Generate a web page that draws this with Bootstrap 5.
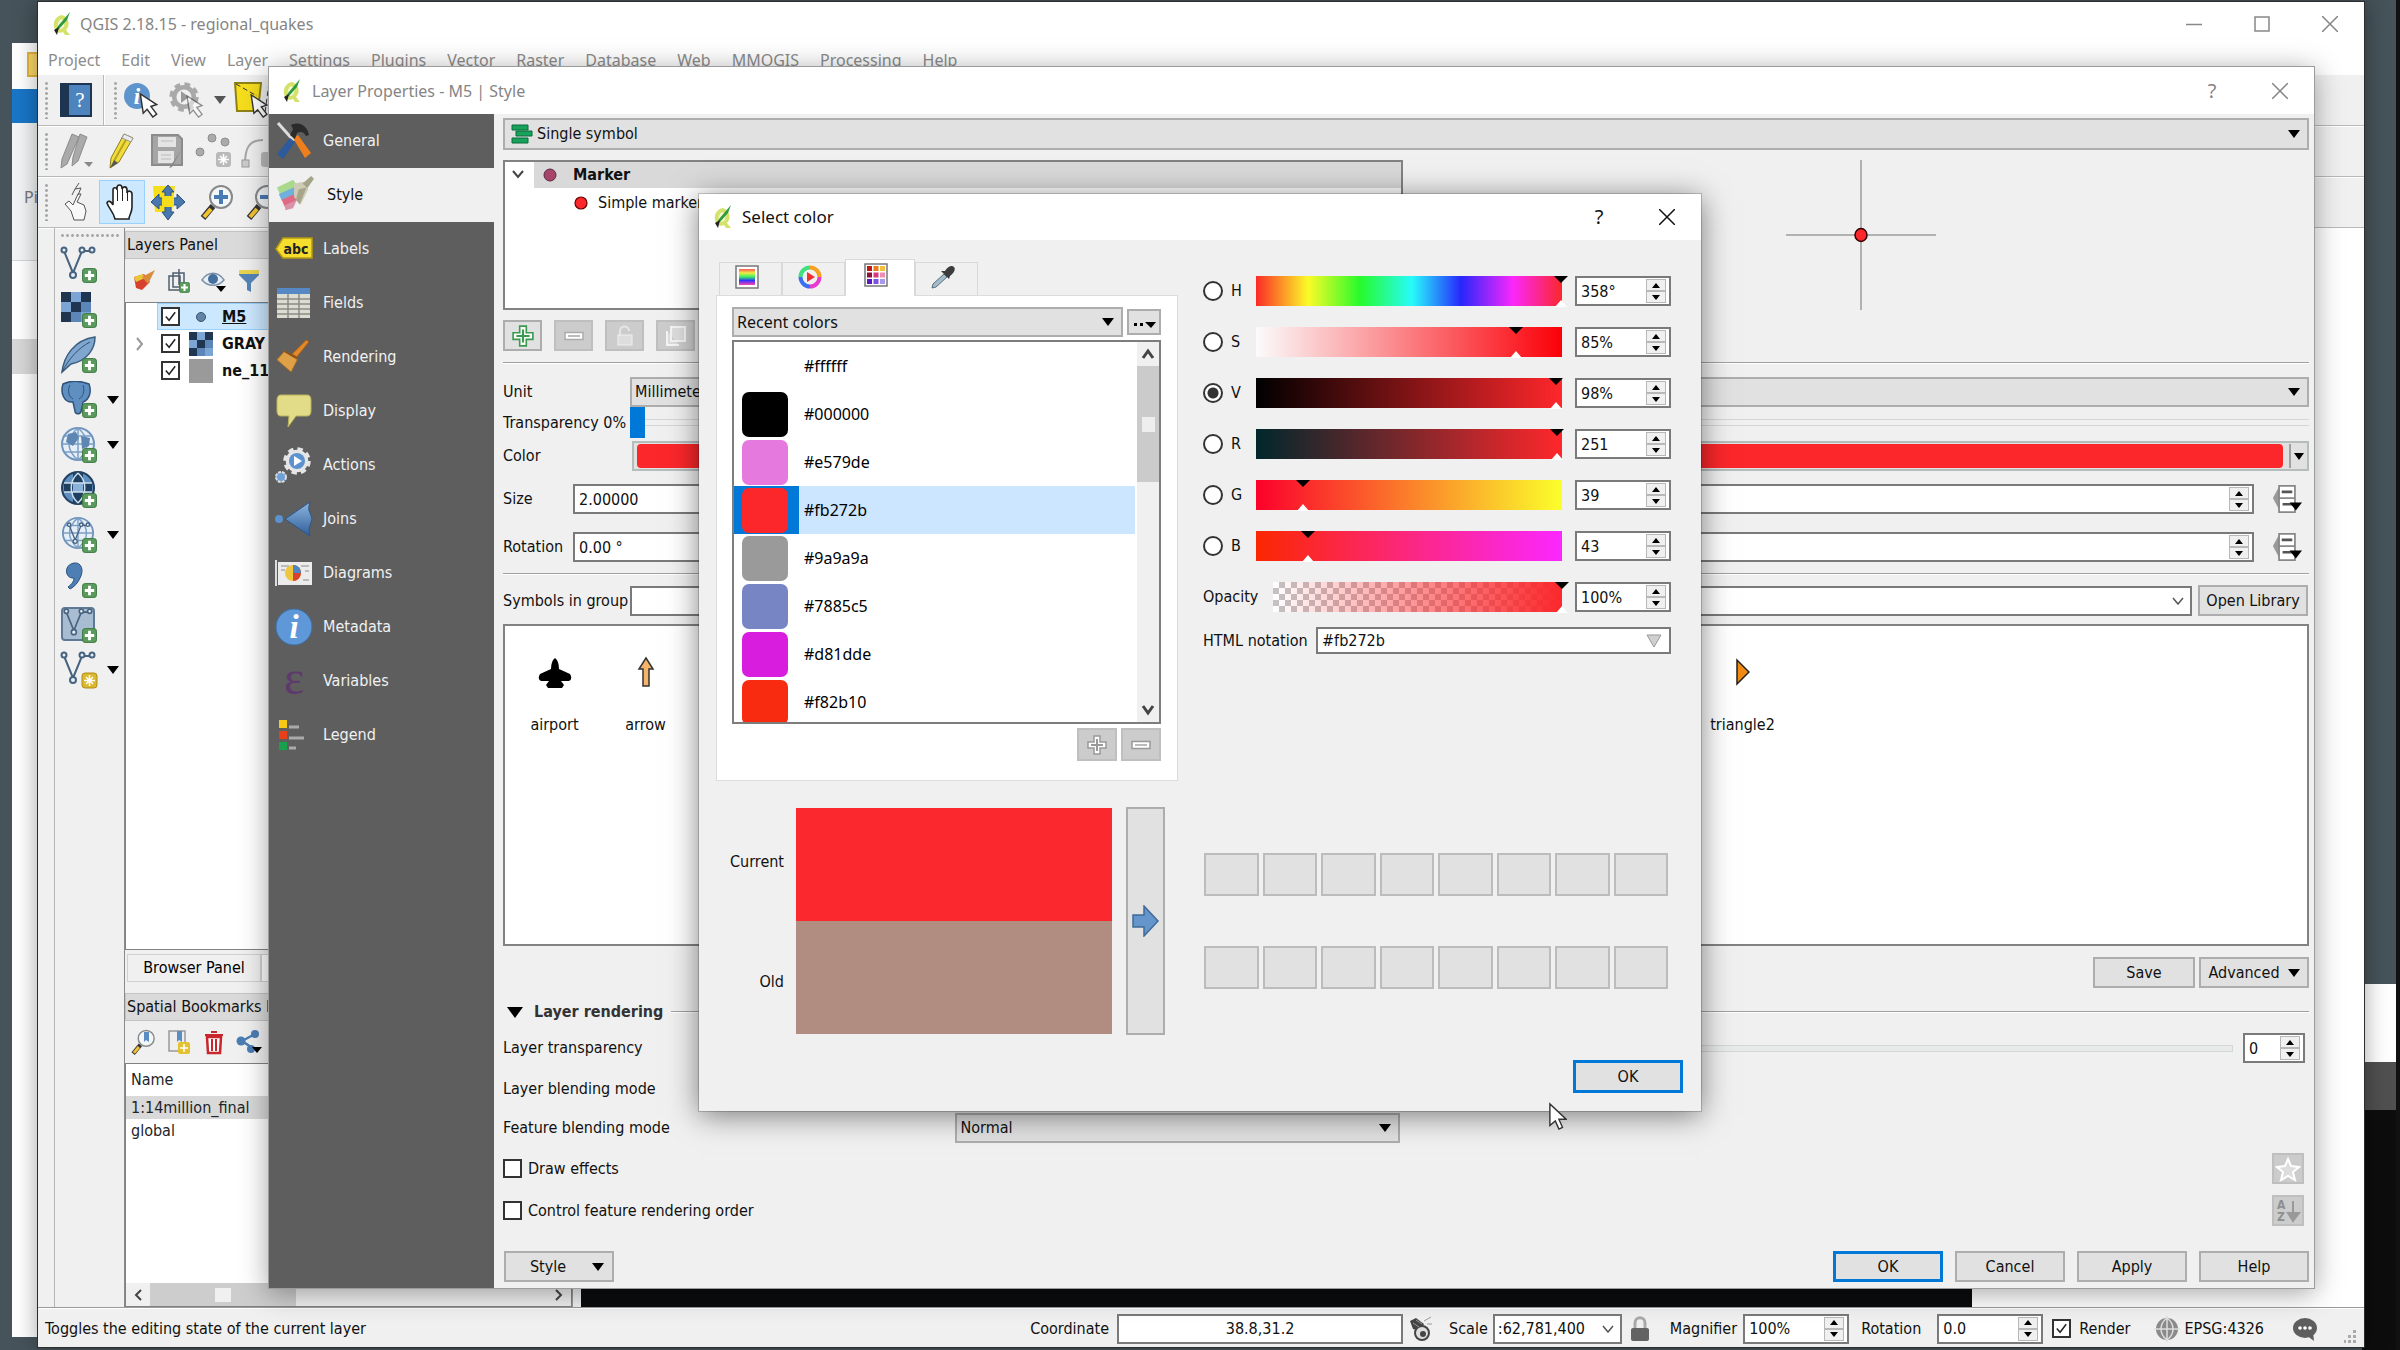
<!DOCTYPE html>
<html lang="en">
<head>
<meta charset="utf-8">
<meta name="viewport" content="width=device-width, initial-scale=1">
<title>QGIS 2.18.15 - regional_quakes</title>
<link href="https://cdn.jsdelivr.net/npm/bootstrap@5.3.0/dist/css/bootstrap.min.css" rel="stylesheet">
<style>
:root{--ui:"DejaVu Sans Condensed","DejaVu Sans","Noto Sans",sans-serif;--cap:"Noto Sans","Open Sans",sans-serif;--face:#f0f0f0;--btn:#e1e1e1;--edge:#adadad;--line:#7a7a7a;--blue:#0078d7;--pick:#fb272b}
html,body{height:100%}
body{margin:0;overflow:hidden;background:#46535a;font:16px/20px var(--ui);color:#111}
svg{display:block;flex:none}
label{white-space:nowrap}
.desk{height:100vh;overflow:hidden}
.edge-strip{position:absolute;right:0;top:0;bottom:0;width:4px;background:#111}
.taskwin{position:absolute;right:4px;width:34px;top:984px;bottom:0;background:#0d0d0d}
.taskwin div:nth-child(1){height:78px;background:#fff}
.taskwin div:nth-child(2){height:48px;background:#505050}
.explorer{position:absolute;left:12px;top:43px;width:60px;bottom:13px;background:#fff;overflow:hidden}
.explorer .fold{width:12px;height:25px;margin:9px 0 12px 15px;background:#fbd667;border:2px solid #e3b43c}
.explorer .ribbon{height:34px;background:#1976c8}
.explorer .rib2{height:138px;background:#f3f4f5;border-bottom:1px solid #d5d5d5;color:#777;font-family:var(--cap);padding:64px 0 0 12px}
.explorer .seltab{height:35px;margin-top:78px;background:#d8d8d8}
.win{position:absolute;display:flex;flex-direction:column}
.win-main{left:37px;right:35px;top:1px;bottom:2px;background:var(--face);border:1px solid #2c2c2c;box-shadow:0 0 22px rgba(0,0,0,.35)}
.win-props{left:268px;right:85px;top:66px;height:1223px;background:var(--face);border:1px solid #9c9c9c;box-shadow:0 4px 26px rgba(0,0,0,.36)}
.win-color{left:699px;width:1002px;top:194px;height:917px;background:var(--face);box-shadow:0 4px 28px rgba(0,0,0,.5),0 0 0 1px rgba(0,0,0,.18)}
.titlebar{height:46px;flex:none;background:#fff;display:flex;align-items:center;font-family:var(--cap)}
.titlebar.dim{color:#858585}
.titlebar .wbtn{width:68px;height:40px;border:0;background:none;display:flex;align-items:center;justify-content:center;color:inherit;padding:0;font-size:20px}
.menus{height:30px;flex:none;background:#fff;font-family:var(--cap);font-size:16px}
.menus a{color:#8c8c8c;text-decoration:none;padding:0 11px 0 10px}
.tools{height:51px;flex:none;border-bottom:1px solid #b9b9b9;box-shadow:0 1px #fff;padding-left:6px}
.tools button,.flat{border:0;background:none;padding:0;display:flex;align-items:center;justify-content:center}
.tools button{width:46px;height:44px}
.tools .on{background:#cce8ff;border:1px solid #99d1ff}
.grip{width:5px;height:38px;background:radial-gradient(circle,#a8a8a8 35%,transparent 45%) 0 0/5px 5px}
.griph{width:60px;height:5px;background:radial-gradient(circle,#a8a8a8 35%,transparent 45%) 0 0/5px 5px}
.vrule{width:2px;align-self:stretch;background:linear-gradient(90deg,#b9b9b9 50%,#fff 50%)}
.gutter{width:17px;border-right:1px solid #b5b5b5}
.vtools{width:70px;border-right:1px solid #8a8a8a;padding:5px 0 0 5px}
.vtools .flat{height:45px;width:60px;justify-content:start;gap:9px}
.dock{width:448px;border-right:1px solid #9a9a9a}
.dock-title{height:28px;background:#dadada;border:1px solid #c3c3c3;padding:0 1px;line-height:25px;overflow:hidden;white-space:nowrap}
.dock-tools{height:43px;padding-left:1px}
.dock-tools .flat{width:35px;height:36px}
.tree{background:#fff;border:1px solid #828282}
.lrow{height:27px;font-weight:700;gap:9px}
.lrow .sel{background:#cce8ff;box-shadow:inset 0 0 0 1px #99d1ff;margin-left:31px;padding-left:4px;gap:9px}
.lrow .twist{width:26px;padding-left:9px;flex:none}
.tickbox{width:19px;height:19px;margin:0!important;border:2px solid #333!important;border-radius:0!important;background-color:#fff!important;flex:none;box-shadow:none!important}
.tickbox:checked{background:#fff url("data:image/svg+xml,%3Csvg xmlns='http://www.w3.org/2000/svg' viewBox='0 0 16 16'%3E%3Cpath d='M3 8l3.500 4L13 3.500' fill='none' stroke='%23222' stroke-width='1.600'/%3E%3C/svg%3E") center/contain no-repeat!important}
.dtab{height:28px;width:134px;background:var(--face);border:1px solid #d0d0d0;padding:0}
.marks{margin:0;line-height:23px}
.marks th,.marks td{padding:0 5px!important;border:0;background:transparent;font-weight:400}
.marks thead th{line-height:32px}
.marks .sel td{background:#d9d9d9;box-shadow:none}
.hbar{height:23px;background:var(--face)}
.map{background:#0b0c0d;width:78%}
.status{height:40px;flex:none;border-top:1px solid #9a9a9a;padding:2px 8px 0 7px;box-shadow:inset 0 1px #fff}
.fld{height:30px;border:2px solid var(--line);border-radius:0;padding:0 6px;background:#fff;color:#111;font:16px/20px var(--ui);min-width:0}
.combo{height:30px;border:2px solid var(--edge);border-radius:0;padding:0 30px 0 6px;color:#111;font:16px/20px var(--ui);background:var(--btn) url("data:image/svg+xml,%3Csvg xmlns='http://www.w3.org/2000/svg' viewBox='0 0 12 8'%3E%3Cpath d='M0 0h12L6 8z'/%3E%3C/svg%3E") right 7px center/12px 8px no-repeat}
.combo.white{background:#fff url("data:image/svg+xml,%3Csvg xmlns='http://www.w3.org/2000/svg' viewBox='0 0 12 8'%3E%3Cpath d='M1 1l5 6 5-6' fill='none' stroke='%23555' stroke-width='1.500'/%3E%3C/svg%3E") right 6px center/12px 8px no-repeat;border-color:var(--line)}
.spin{height:30px;border:2px solid var(--line);background:#fff;display:flex;align-items:center;padding-right:3px}
.spin input{border:0;outline:0;background:none;flex:1;min-width:0;padding:1px 4px 0;font:16px/20px var(--ui);color:#111}
.spin .ud{display:flex;flex-direction:column;flex:none}
.spin .ud button{width:20px;height:12px;border:1px solid #b8b8b8;background:var(--face);padding:0;display:flex;align-items:center;justify-content:center}
.spin .ud button::before{content:"";border:4px solid transparent;border-top:0;border-bottom:5px solid #000}
.spin .ud button+button::before{border-bottom:0;border-top:5px solid #000}
.pb{height:31px;border:2px solid var(--edge);border-radius:0;background:var(--btn);padding:0;color:#111;font:16px/20px var(--ui);display:flex;align-items:center;justify-content:center;flex:none}
.pb.dis{background:#ccc;border-color:#bfbfbf}
.pb.def{border:3px solid var(--blue)}
.caret{width:0;height:0;border:6px solid transparent;border-top:8px solid #000;border-bottom:0;flex:none}
.side{width:225px;background:#5e5e5e;flex:none}
.side a{display:flex;align-items:center;height:54px;color:#f1f1f1;text-decoration:none;padding-left:6px;gap:10px}
.side a.active{background:var(--face);color:#111;gap:12px}
.pane{padding:4px 5px 0 9px;min-width:0}
.rule2{height:2px;background:linear-gradient(#a0a0a0 50%,#fff 50%)}
.groove{height:7px;border:1px solid #d3d6d6;background:#e9ebeb}
.thin{appearance:none;-webkit-appearance:none;height:31px;margin:0;background:linear-gradient(#d3d6d6,#d3d6d6) 0 12px/100% 1px no-repeat,linear-gradient(#d3d6d6,#d3d6d6) 0 18px/100% 1px no-repeat}
.thin::-webkit-slider-thumb{-webkit-appearance:none;width:15px;height:31px;background:var(--blue)}
.l-unit{width:127px}.l-size{width:70px}
.swbtn{height:30px;border:2px solid #b4bcbc;background:var(--btn);padding:1px 0 1px 3px;display:flex;align-items:stretch}
.swbtn i{flex:1;background:var(--pick);border-radius:4px}
.swbtn b{width:18px;margin-left:6px;border-left:2px solid #a0a0a0;display:flex;align-items:center;justify-content:center}
.swbtn .caret{border-width:5px;border-top-width:7px;border-bottom:0}
.marklist{height:322px;background:#fff;border:2px solid #828282;padding:28px 0 0 4px}
.marklist figure{width:91px;margin:0;text-align:center}
.marklist svg{margin:0 auto;height:36px}
.marklist figcaption{margin-top:25px}
.marklist .far{margin-left:1006px}
.tabs{padding-left:3px}
.tabs .nav-link{height:33px;width:63px;border:1px solid #d9d9d9;border-bottom:0;border-radius:0;padding:0 8px 4px 0;background:var(--face);display:flex;align-items:center;justify-content:center}
.tabs .nav-link.active{height:37px;width:70px;background:#fff;margin-bottom:-1px;padding-bottom:7px;z-index:1;position:relative}
.tabpage{height:486px;background:#fff;border:1px solid #dcdcdc;padding:11px 16px 0 15px}
.colors{height:384px;border:2px solid #7d7d7d;overflow:hidden}
.colors .rows{min-width:0;margin-right:2px}
.colors .rowc{height:48px;display:flex;align-items:center;border:0;padding:0;background:none;width:100%;flex:none;font-family:var(--cap);text-align:left}
.chip{width:65px;height:48px;padding:2px 11px 1px 8px;flex:none}
.chip i{display:block;height:45px;border-radius:7px}
.rowc.sel{background:#cce6ff!important}.rowc.sel .chip{background:var(--blue)}
.rowc span:last-child{margin-left:5px}
.vbar{width:22px;background:var(--face);flex:none}
.vbar .thumb{height:116px;background:#cbcbcb}
.vbar .thumb i{width:13px;height:15px;background:#eee}
.radio{appearance:none;-webkit-appearance:none;width:20px;height:20px;margin:0;border:2px solid #333;border-radius:50%;background:#fff;flex:none}
.radio:checked{background:radial-gradient(circle,#333 5px,#fff 6px)}
.chan{display:flex;align-items:center;height:30px;margin-bottom:21px}
.chan>label{width:18px;margin-left:8px}
.ramp{appearance:none;-webkit-appearance:none;flex:1;height:30px;margin:0 6px 0 0;min-width:0;background-color:transparent;background-repeat:no-repeat;background-position:center;background-size:calc(100% - 14px) 100%}
.ramp::-webkit-slider-thumb{-webkit-appearance:none;width:14px;height:32px;border:0;border-radius:0;background:url("data:image/svg+xml,%3Csvg xmlns='http://www.w3.org/2000/svg' viewBox='0 0 14 32'%3E%3Cpath d='M0 1h14L7 8z'/%3E%3Cpath d='M1 32h12L7 25z' fill='%23fff'/%3E%3C/svg%3E")}
.chan .spin{width:96px}
.r-h{background-image:linear-gradient(90deg,#fb2b27,#fbfb27 17%,#27fb2b 34%,#27fbfb 51%,#2727fb 67%,#fb27fb 84%,#fb272b)}
.r-s{background-image:linear-gradient(90deg,#fbfbfb,#fb0008)}
.r-v{background-image:linear-gradient(90deg,#000,#ff272b)}
.r-r{background-image:linear-gradient(90deg,#00272b,#ff272b)}
.r-g{background-image:linear-gradient(90deg,#fb002b,#fbff2b)}
.r-b{background-image:linear-gradient(90deg,#fb2700,#fb27ff)}
.r-o{background-image:linear-gradient(90deg,rgba(251,39,43,0),#fb272b),repeating-conic-gradient(#c3c3c3 0 25%,#fff 0 50%);background-size:100% 100%,12px 12px;background-position:0 0;background-repeat:no-repeat,repeat;background-clip:content-box;background-origin:content-box;padding:0 7px}
.r-o::-webkit-slider-runnable-track{margin:0 -7px}
.cells{gap:4px;margin:0 3px 0 1px}
.cells button{flex:1;height:43px;border:2px solid #bcbcbc;background:var(--btn);padding:0}
.cur{position:absolute;left:1549px;top:1102px}
</style>
</head>
<body>
<svg width="0" height="0" style="position:absolute" aria-hidden="true">
<defs>
<linearGradient id="gb" x1="0" y1="0" x2="0" y2="1"><stop offset="0" stop-color="#8fb6df"/><stop offset="1" stop-color="#2f5f9a"/></linearGradient>
<linearGradient id="rain" x1="0" y1="0" x2="0" y2="1"><stop offset="0" stop-color="#f55"/><stop offset=".25" stop-color="#ee4"/><stop offset=".5" stop-color="#3e6"/><stop offset=".72" stop-color="#33f"/><stop offset="1" stop-color="#f4a"/></linearGradient>
<symbol id="qgis" viewBox="0 0 20 24"><path d="M10 3C4 4 1 9 2 15c1 5 6 7 9 5l2 3h5l-4-5c4-4 4-12-4-15z" fill="#d5e26a"/><path d="M9 7c-3 2-4 6-3 9 2 2 5 1 6-2 1-4 0-6-3-7z" fill="#f4f8cf"/><path d="M18 0l-3 8-8 9-3 1 2-4z" fill="#2e9a3f"/><path d="M2 18l5-3-2 8z" fill="#222"/></symbol>
<symbol id="plusb" viewBox="0 0 16 16"><rect x=".5" y=".5" width="15" height="15" rx="3" fill="#5a9a5c" stroke="#3c783f"/><path d="M8 3v10M3 8h10" stroke="#fff" stroke-width="3"/></symbol>
<symbol id="vnode" viewBox="0 0 36 36"><path d="M4 5l9 22L22 5h10" fill="none" stroke="#47637f" stroke-width="2"/><g fill="#e8eef5" stroke="#47637f" stroke-width="2"><circle cx="4" cy="4" r="2.500"/><circle cx="22" cy="4" r="2.500"/><circle cx="32" cy="4" r="2.500"/><circle cx="13" cy="29" r="3"/></g></symbol>
<symbol id="raster" viewBox="0 0 30 30"><path d="M0 0h30v30H0z" fill="#5c86b8"/><path d="M0 0h10v10H0zM20 0h10v10H20zM10 10h10v10H10zM0 20h10v10H0z" fill="#1f3550"/><path d="M10 0h10v10H10zM0 10h10v10H0zM20 20h10v10H20z" fill="#7ca5d6"/></symbol>
<symbol id="globe" viewBox="0 0 36 36"><circle cx="18" cy="18" r="16" fill="#e6eff8" stroke="#6f95bd" stroke-width="2"/><path d="M2 18h32M5 10h26M5 26h26M18 2v32M18 2c-12 10-12 22 0 32M18 2c12 10 12 22 0 32" fill="none" stroke="#7d9fc4" stroke-width="1.500"/></symbol>
<symbol id="brush" viewBox="0 0 40 40"><path d="M1 12l17-8 5 7-19 8z" fill="#a8d98c"/><path d="M3 19l18-8 2 7-17 8z" fill="#6fb0dc"/><path d="M6 25l16-7 1 7-14 7z" fill="#e06a86"/><path d="M9 31l13-6-4 9-8 2z" fill="#d893a8"/><path d="M19 8l10-2 5 8-8 16-7-8z" fill="#cfccb6"/><path d="M24 14l8-2-7 18-4-5z" fill="#a9a58d"/><path d="M28 8l9-8 3 3-7 10z" fill="#a5a489"/></symbol>
<symbol id="broom" viewBox="0 0 36 36"><path d="M32 1l3 2-13 16-5-3z" fill="#e0882a" stroke="#a65c15"/><path d="M9 13l14 8-7 14L1 22z" fill="#dfa048" stroke="#a96f24"/><path d="M9 13l14 8" stroke="#8c5418" stroke-width="2"/></symbol>
<symbol id="mag" viewBox="0 0 36 36"><path d="M13 22L3 34" stroke="#333" stroke-width="6"/><path d="M11 25L4 33" stroke="#f2c230" stroke-width="4"/><circle cx="21" cy="13" r="11" fill="#f3f6f9" stroke="#888" stroke-width="2"/></symbol>
<symbol id="arrowcur" viewBox="0 0 20 30"><path d="M1 1v24l6-5 4 9 4-2-4-9h8z" fill="#fff" stroke="#333" stroke-width="1.600"/></symbol>
<symbol id="tiltcur" viewBox="0 0 20 26"><path d="M1 1l3 20 4-4 6 8 4-3-6-8 6-2z" fill="#fff" stroke="#333" stroke-width="1.500"/></symbol>
<symbol id="gear" viewBox="0 0 36 36"><circle cx="18" cy="18" r="14.500" fill="none" stroke="currentColor" stroke-width="4" stroke-dasharray="6.500 4.900"/><circle cx="18" cy="18" r="11" fill="none" stroke="currentColor" stroke-width="5"/></symbol>
<symbol id="addx" viewBox="0 0 20 20"><path d="M7 1h6v6h6v6h-6v6H7v-6H1V7h6z" fill="#fff" stroke="currentColor" stroke-width="1.500"/><path d="M10 4v12M4 10h12" stroke="currentColor" stroke-width="2"/></symbol>
<symbol id="subx" viewBox="0 0 20 20"><path d="M1 6.500h18v7H1z" fill="#fff" stroke="currentColor" stroke-width="1.500"/><path d="M4 10h12" stroke="#bbb" stroke-width="2"/></symbol>
<symbol id="ovr" viewBox="0 0 34 34"><path d="M8 3L1 16l7 13z" fill="#999"/><path d="M8 2h18v30H8zM8 16h18" fill="#fff" stroke="#888" stroke-width="2"/><path d="M11 9h12M12 23h14" stroke="#555" stroke-width="3"/><path d="M20 21h14l-7 9z"/></symbol>
<symbol id="xx" viewBox="0 0 16 16"><path d="M0 0l16 16M16 0L0 16" stroke="currentColor" stroke-width="1.500"/></symbol>
</defs></svg>

<div class="desk">
<div class="explorer"><div class="fold"></div><div class="ribbon"></div><div class="rib2">Pi</div><div class="seltab"></div></div>
<div class="taskwin"><div></div><div></div></div>
<div class="edge-strip"></div>

<main class="win win-main">
  <header class="titlebar dim" style="height:43px;padding-left:14px">
    <svg width="20" height="24" class="me-2"><use href="#qgis"/></svg><span>QGIS 2.18.15 - regional_quakes</span>
    <div class="ms-auto d-flex">
      <button class="wbtn" aria-label="Minimize"><svg width="16" height="16"><path d="M0 8.500h16" stroke="#888" stroke-width="1.500"/></svg></button>
      <button class="wbtn" aria-label="Maximize"><svg width="16" height="16"><path d="M1 1h14v14H1z" fill="none" stroke="#888" stroke-width="1.500"/></svg></button>
      <button class="wbtn" aria-label="Close"><svg width="16" height="16"><use href="#xx"/></svg></button>
    </div>
  </header>
  <nav class="menus d-flex align-items-center">
    <a href="#">Project</a><a href="#">Edit</a><a href="#">View</a><a href="#">Layer</a><a href="#">Settings</a><a href="#">Plugins</a><a href="#">Vector</a><a href="#">Raster</a><a href="#">Database</a><a href="#">Web</a><a href="#">MMOGIS</a><a href="#">Processing</a><a href="#">Help</a>
  </nav>
  <div class="tools d-flex align-items-center">
    <span class="grip"></span>
    <button class="mx-1" aria-label="Help contents"><svg width="32" height="34"><path d="M1 1h30v32H1z" fill="#4d84bd" stroke="#1d3550" stroke-width="2"/><path d="M1 1h8v32H1z" fill="#1d3550"/><text x="20" y="24" text-anchor="middle" font-size="21" font-family="Liberation Serif" fill="#fff">?</text></svg></button>
    <span class="vrule"></span><span class="grip ms-2"></span>
    <button aria-label="Identify"><svg width="38" height="38"><circle cx="15" cy="15" r="13" fill="#5e94cc"/><text x="15" y="23" text-anchor="middle" font-size="23" font-style="italic" font-weight="700" font-family="Liberation Serif" fill="#fff">i</text><use href="#tiltcur" x="17" y="12" width="20" height="25"/></svg></button>
    <button aria-label="Run action"><svg width="38" height="38" color="#a9a9a9"><use href="#gear" x="0" y="0" width="32" height="32"/><path d="M13 10v12l8-6z" fill="#999"/><use href="#tiltcur" x="18" y="14" width="18" height="23" opacity=".5"/></svg></button>
    <span class="caret mx-1" style="border-top-color:#555"></span>
    <button aria-label="Select"><svg width="40" height="38"><path d="M2 2h26l-3 28H4z" fill="#f6de1d" stroke="#8f8215" stroke-width="2"/><path d="M3 3l21 12M36 2l-4 30" stroke="#333" stroke-dasharray="5 3" fill="none"/><use href="#tiltcur" x="17" y="13" width="19" height="24"/></svg></button>
  </div>
  <div class="tools d-flex align-items-center">
    <span class="grip"></span>
    <button class="ms-1" aria-label="Current edits"><svg width="36" height="38"><g fill="#aaa" stroke="#8c8c8c"><path d="M14 2l7 3-12 27-6 4 1-9z"/><path d="M22 2l7 3-9 24-6 5 1-9z"/></g><path d="M26 30h9l-4 5z" fill="#888"/></svg></button>
    <button aria-label="Toggle editing"><svg width="36" height="38"><path d="M20 2l9 4-14 24-9 6 1-10z" fill="#f0dc3c" stroke="#8d7f1c"/><path d="M24 4L10 29" stroke="#b9a51e" stroke-width="2"/><path d="M20 2l9 4-2 4-9-4z" fill="#eaeaea" stroke="#999"/><path d="M6 36l4-8 4 3z" fill="#555"/></svg></button>
    <button aria-label="Save edits"><svg width="36" height="36"><path d="M2 2h26l4 4v26H2z" fill="#a5a5a5" stroke="#8b8b8b" stroke-width="2"/><path d="M8 4h18v10H8zM8 18h16v12H8z" fill="#e4e4e4"/><path d="M11 8h12M11 22h10M11 26h10" stroke="#bbb"/><path d="M32 16L22 34l-3 1z" fill="#888"/></svg></button>
    <button aria-label="Add feature"><svg width="40" height="38"><g fill="#ababab" stroke="#8f8f8f"><circle cx="6" cy="20" r="4"/><circle cx="18" cy="6" r="4"/><circle cx="31" cy="10" r="4"/></g><rect x="22" y="20" width="15" height="15" rx="3" fill="#b9b9b9"/><path d="M29.500 22v11M24 27.500h11M26 24l7 7M33 24l-7 7" stroke="#fff" stroke-width="1.500"/></svg></button>
    <button aria-label="Move feature"><svg width="38" height="38"><path d="M4 32c0-16 4-24 18-24" fill="none" stroke="#a6a6a6" stroke-width="2"/><rect x="1" y="28" width="7" height="7" fill="#ccc" stroke="#999"/><rect x="20" y="20" width="15" height="15" rx="3" fill="#b9b9b9"/></svg></button>
  </div>
  <div class="tools d-flex align-items-center">
    <span class="grip"></span>
    <button class="ms-1" aria-label="Touch zoom"><svg width="34" height="40"><path d="M19 12l-5 11-4-4-4 3 6 7 3 9h10l2-9-2-6-7-3 4-8z" fill="#f8f8f8" stroke="#555"/><path d="M13 13l3-6 6-1-3 7M16 7l4-6" fill="none" stroke="#555"/></svg></button>
    <button class="on" aria-label="Pan"><svg width="34" height="38"><path d="M10 36c-2-8-6-10-8-16 1-3 4-2 6 2V7c0-3 4-3 4 0v-2c0-4 5-4 5 0v1c1-3 5-3 5 1v3c1-3 5-2 5 1v13c0 6-3 8-3 12z" fill="#fff" stroke="#222" stroke-width="1.600"/><path d="M12.500 7v11M17.500 6v12M22.500 8v10" stroke="#222"/></svg></button>
    <button aria-label="Pan to selection"><svg width="36" height="38"><path d="M3 3h22l-3 26H5z" fill="#f6de1d"/><path d="M18 2l6 7h-3v6h6v-4l8 8-8 7v-4h-6v7h3l-6 8-6-8h3v-7h-6v4l-8-7 8-8v4h6V9h-3z" fill="#4878ad" stroke="#2c5282"/><path d="M12 13h12v11H12z" fill="#f6de1d"/></svg></button>
    <button class="ms-1" aria-label="Zoom in"><svg width="36" height="38"><use href="#mag" width="36" height="38"/><path d="M21 7v14M14 14h14" stroke="#4a7ab3" stroke-width="4"/></svg></button>
    <button aria-label="Zoom out"><svg width="36" height="38"><use href="#mag" width="36" height="38"/><path d="M14 14h14" stroke="#4a7ab3" stroke-width="4"/></svg></button>
  </div>

  <div class="d-flex flex-grow-1" style="min-height:0">
    <div class="gutter"></div>
    <div class="vtools">
      <span class="griph d-block mb-1"></span>
      <button class="flat" aria-label="Add vector layer"><svg width="38" height="38"><use href="#vnode" width="36" height="36"/><use href="#plusb" x="22" y="22" width="15" height="15"/></svg></button>
      <button class="flat" aria-label="Add raster layer"><svg width="38" height="38"><use href="#raster" x="1" y="1" width="30" height="30"/><use href="#plusb" x="22" y="22" width="15" height="15"/></svg></button>
      <button class="flat" aria-label="Add SpatiaLite layer"><svg width="38" height="38"><path d="M2 36C4 20 14 4 35 1c0 12-8 24-24 27z" fill="#7ea6ce" stroke="#3a5c80" stroke-width="1.500"/><path d="M2 36C8 24 18 12 30 6" fill="none" stroke="#33506f"/><use href="#plusb" x="22" y="22" width="15" height="15"/></svg></button>
      <button class="flat" aria-label="Add PostGIS layer"><svg width="38" height="38"><path d="M3 3c8-4 18-3 26 0 3 8 0 16-6 18l-2 10c-2 3-6 2-6-1l-2-9C4 22 0 12 3 3z" fill="#5f8fc0" stroke="#2f5379" stroke-width="1.500"/><path d="M10 4c-3 6-1 12 3 14M23 4c2 6 0 12-4 14" fill="none" stroke="#2f5379"/><use href="#plusb" x="22" y="22" width="15" height="15"/></svg><span class="caret"></span></button>
      <button class="flat" aria-label="Add WMS layer"><svg width="38" height="38"><use href="#globe" width="36" height="36"/><path d="M8 8l8-2 3 6-6 8-7-4zM21 10l9 2-1 8-7 3z" fill="#5d86b2"/><use href="#plusb" x="22" y="22" width="15" height="15"/></svg><span class="caret"></span></button>
      <button class="flat" aria-label="Add WCS layer"><svg width="38" height="38"><circle cx="18" cy="17" r="16" fill="#5f8fbf" stroke="#22405f" stroke-width="2"/><path d="M4 12h28v9H4zM13 2h10v30H13z" fill="#1f3f61"/><path d="M13 12h10v9H13z" fill="#8bb2d9"/><path d="M4 12h28M4 21h28M18 2c-9 8-9 22 0 30M18 2c9 8 9 22 0 30" fill="none" stroke="#cfe0f0" stroke-width="1.500"/><use href="#plusb" x="22" y="22" width="15" height="15"/></svg></button>
      <button class="flat" aria-label="Add WFS layer"><svg width="38" height="38"><use href="#globe" width="36" height="34"/><use href="#vnode" x="6" y="6" width="25" height="24"/><use href="#plusb" x="22" y="22" width="15" height="15"/></svg><span class="caret"></span></button>
      <button class="flat" aria-label="Add delimited text"><svg width="38" height="38"><path d="M14 2c8-1 10 8 6 15-2 5-6 9-10 11l-2-2c4-3 6-6 6-9-9 1-11-13 0-15z" fill="#4d7fb5" stroke="#2c5078"/><use href="#plusb" x="22" y="22" width="15" height="15"/></svg></button>
      <button class="flat" aria-label="Add virtual layer"><svg width="38" height="38"><rect x="2" y="2" width="32" height="32" rx="3" fill="#a9bdd2" stroke="#5d7994" stroke-width="2"/><use href="#vnode" x="3" y="2" width="30" height="30"/><use href="#plusb" x="22" y="22" width="15" height="15"/></svg></button>
      <button class="flat" aria-label="New shapefile"><svg width="38" height="38"><use href="#vnode" width="36" height="36"/><rect x="22" y="22" width="15" height="15" rx="3" fill="#dcb82e" stroke="#b08e18"/><path d="M29.500 24v11M24 29.500h11M26 26l7 7M33 26l-7 7" stroke="#fff" stroke-width="1.500"/></svg><span class="caret"></span></button>
    </div>
    <aside class="dock d-flex flex-column">
      <div class="dock-title" style="margin-top:3px">Layers Panel</div>
      <div class="dock-tools d-flex align-items-center">
        <button class="flat" aria-label="Style panel"><svg width="24" height="26"><path d="M2 9l10-3 6 8-8 8-6-2z" fill="#d8412f"/><path d="M2 9l9-3 2 4-9 4z" fill="#e8c838"/><path d="M10 9l6 7 7-14z" fill="#d98b3c"/></svg></button>
        <button class="flat" aria-label="Add group"><svg width="24" height="26"><path d="M2 8h11v14H2zM6 5h11v14H6zM12 1v16" fill="none" stroke="#4f5f6e" stroke-width="1.500"/><use href="#plusb" x="12" y="14" width="11" height="11"/></svg></button>
        <button class="flat" aria-label="Visibility"><svg width="26" height="26"><path d="M1 12c6-9 16-9 22 0-6 7-16 7-22 0z" fill="#e7eef5" stroke="#7890a8" stroke-width="1.500"/><circle cx="12" cy="11" r="5" fill="#456f9c"/><path d="M15 18h10l-5 6z"/></svg></button>
        <button class="flat" aria-label="Filter"><svg width="24" height="26"><path d="M2 2h20v5l-8 8v9l-4-2v-7L2 7z" fill="#5584b8"/><path d="M2 2h20v4H2z" fill="#e8d44c"/></svg></button>
      </div>
      <div class="tree" style="height:648px">
        <div class="lrow d-flex"><div class="sel d-flex align-items-center flex-grow-1"><input class="form-check-input tickbox" type="checkbox" checked aria-label="M5"><svg width="24" height="12"><circle cx="12" cy="6" r="4.500" fill="#6484a6" stroke="#39526e"/></svg><u>M5</u></div></div>
        <div class="lrow d-flex align-items-center"><span class="twist"><svg width="10" height="16"><path d="M2 2l5 6-5 6" fill="none" stroke="#999" stroke-width="2"/></svg></span><input class="form-check-input tickbox" type="checkbox" checked aria-label="GRAY"><svg width="24" height="24"><use href="#raster" width="24" height="24"/></svg><span>GRAY</span></div>
        <div class="lrow d-flex align-items-center"><span class="twist"></span><input class="form-check-input tickbox" type="checkbox" checked aria-label="ne_11"><svg width="24" height="24"><path d="M0 0h24v24H0z" fill="#9a9a9a"/></svg><span>ne_11</span></div>
      </div>
      <div class="d-flex mt-1" style="padding-left:2px"><button class="dtab">Browser Panel</button><button class="dtab bg-white" aria-label="Layers Panel tab"></button></div>
      <div class="dock-title" style="margin-top:11px">Spatial Bookmarks Panel</div>
      <div class="dock-tools d-flex align-items-center" style="height:42px">
        <button class="flat" aria-label="Zoom to bookmark"><svg width="26" height="26"><use href="#mag" width="26" height="26"/><path d="M13 3h5v10l-3-2-2 2z" fill="#5a8cc2"/></svg></button>
        <button class="flat" aria-label="Add bookmark"><svg width="26" height="26"><path d="M3 2h16v20H3z" fill="#eee" stroke="#999" stroke-width="1.500"/><path d="M11 2h5v11l-3-2-2 2z" fill="#5a8cc2"/><rect x="12" y="13" width="12" height="12" rx="2" fill="#e3c12f"/><path d="M18 15v8M14 19h8" stroke="#fff" stroke-width="1.500"/></svg></button>
        <button class="flat" aria-label="Delete bookmark"><svg width="22" height="26"><path d="M4 8h14l-1 16H5z" fill="#fff" stroke="#c9252c" stroke-width="2.500"/><path d="M9 10v12M13 10v12M2 6h18M8 3h6" stroke="#c9252c" stroke-width="2"/></svg></button>
        <button class="flat" aria-label="Share bookmarks"><svg width="26" height="26"><path d="M19 5L6 12l12 8" fill="none" stroke="#4b7db4" stroke-width="2.500"/><g fill="#4b7db4"><circle cx="19" cy="5" r="4"/><circle cx="5" cy="12" r="4.500"/><circle cx="15" cy="20" r="4"/></g><path d="M16 18h10l-5 6z"/></svg></button>
      </div>
      <div class="tree flex-grow-1 d-flex flex-column">
        <table class="table marks"><thead><tr><th>Name</th></tr></thead><tbody><tr class="sel"><td>1:14million_final</td></tr><tr><td>global</td></tr></tbody></table>
        <div class="hbar d-flex align-items-center mt-auto px-2"><svg width="8" height="12"><path d="M7 1L2 6l5 5" fill="none" stroke="#444" stroke-width="2"/></svg><div class="d-flex align-items-center justify-content-center h-100 ms-2" style="width:146px;background:#cdcdcd"><span style="width:16px;height:14px;background:#f0f0f0"></span></div><svg width="8" height="12" class="ms-auto"><path d="M1 1l5 5-5 5" fill="none" stroke="#444" stroke-width="2"/></svg></div>
      </div>
    </aside>
    <section class="flex-grow-1 d-flex bg-white ms-2"><div class="map"></div></section>
  </div>

  <footer class="status d-flex align-items-center">
    <span>Toggles the editing state of the current layer</span>
    <label class="ms-auto" for="coord">Coordinate</label><input id="coord" class="fld text-center ms-2" style="width:286px" value="38.8,31.2">
    <svg width="26" height="26" class="ms-1"><path d="M3 5l6-3 8 6-4 7-7-2z" fill="#444"/><circle cx="15" cy="17" r="7" fill="#ddd" stroke="#444" stroke-width="2"/><circle cx="16" cy="18" r="3" fill="#444"/><path d="M17 5l7-4M20 8h5M6 7l6 4M9 4l6 4" stroke="#999"/></svg>
    <label class="ms-3" for="scale">Scale</label><select id="scale" class="combo white form-select" style="width:129px;padding-left:3px;margin-left:5px"><option>:62,781,400</option></select>
    <svg width="20" height="26" class="ms-2"><path d="M5 13V7c0-7 10-7 10 0v6" fill="none" stroke="#aaa" stroke-width="3"/><rect x="1" y="12" width="18" height="13" rx="2" fill="#636363"/></svg>
    <label style="margin-left:20px" for="magn">Magnifier</label><div class="spin" style="width:106px;margin-left:6px"><input id="magn" value="100%"><span class="ud"><button aria-label="Up"></button><button aria-label="Down"></button></span></div>
    <label style="margin-left:12px" for="rotm">Rotation</label><div class="spin" style="width:106px;margin-left:16px"><input id="rotm" value="0.0"><span class="ud"><button aria-label="Up"></button><button aria-label="Down"></button></span></div>
    <input class="form-check-input tickbox" style="margin-left:9px!important" type="checkbox" id="rend" checked><label for="rend" class="ms-2">Render</label>
    <svg width="26" height="26" style="margin-left:24px"><circle cx="13" cy="13" r="11" fill="#8a8a8a"/><path d="M0 13h26M13 0v26M13 2c-8 6-8 16 0 22M13 2c8 6 8 16 0 22" fill="none" stroke="#ddd" stroke-width="1.500"/></svg><span class="ms-1">EPSG:4326</span>
    <svg width="26" height="24" style="margin:0 26px 0 28px"><ellipse cx="13" cy="11" rx="12" ry="10" fill="#5e5e5e"/><path d="M14 18l8 6-1-9z" fill="#5e5e5e"/><g fill="#fff"><circle cx="8" cy="11" r="1.800"/><circle cx="13" cy="11" r="1.800"/><circle cx="18" cy="11" r="1.800"/></g></svg>
    <svg width="12" height="14" class="align-self-end mb-1"><g fill="#aaa"><path d="M9 1h3v3H9zM9 6h3v3H9zM9 11h3v3H9zM4 6h3v3H4zM4 11h3v3H4zM0 11h2v3H0z"/></g></svg>
  </footer>
</main>

<section class="win win-props">
  <header class="titlebar dim" style="height:47px;padding-left:13px">
    <svg width="20" height="24"><use href="#qgis"/></svg><span style="margin-left:10px">Layer Properties - M5 | Style</span>
    <div class="ms-auto d-flex"><button class="wbtn">?</button><button class="wbtn" aria-label="Close"><svg width="16" height="16"><use href="#xx"/></svg></button></div>
  </header>
  <div class="d-flex flex-grow-1" style="min-height:0">
    <nav class="side">
      <a href="#"><svg width="38" height="38"><path d="M3 1l16 18" stroke="#ddd" stroke-width="3"/><path d="M15 16l5 4L8 37l-6-5z" fill="#2c5a9b"/><path d="M18 16l5-3 13 18-6 5z" fill="#ef7f1d"/><path d="M16 3c8-4 16 0 18 10l-3 1c-2-4-5-5-9-3l-2 6-5-4 3-6z" fill="#2b2b2b"/></svg><span>General</span></a>
      <a href="#" class="active"><svg width="40" height="38"><use href="#brush" width="40" height="38"/></svg><span>Style</span></a>
      <a href="#"><svg width="38" height="24"><path d="M1 12l7-11h29v20H8z" fill="#f4dd2c" stroke="#b59a13" stroke-width="1.500"/><text x="21" y="17" text-anchor="middle" font-size="14" font-weight="700" fill="#222">abc</text></svg><span>Labels</span></a>
      <a href="#"><svg width="38" height="32"><path d="M2 1h33v30H2z" fill="#dcdcd2"/><path d="M2 1h33v6H2z" fill="#5588c4"/><path d="M2 12h33M2 17h33M2 22h33M2 27h33M13 7v24M24 7v24" stroke="#8c8c86" stroke-width="1.500"/></svg><span>Fields</span></a>
      <a href="#"><svg width="38" height="36"><use href="#broom" width="36" height="34"/></svg><span>Rendering</span></a>
      <a href="#"><svg width="38" height="34"><path d="M6 1h26q4 0 4 5v11q0 5-4 5H21l-8 11 1-11H6q-4 0-4-5V6q0-5 4-5z" fill="#e2dc88" stroke="#b9b25a"/></svg><span>Display</span></a>
      <a href="#"><svg width="38" height="40" color="#e6e6e6"><use href="#gear" x="7" y="0" width="30" height="32"/><circle cx="22" cy="16" r="8" fill="#5d92cf"/><path d="M19 11v10l8-5z" fill="#fff"/><circle cx="6" cy="32" r="5" fill="#6fa0d8" stroke="#ddd" stroke-width="2" stroke-dasharray="3 1"/></svg><span>Actions</span></a>
      <a href="#"><svg width="38" height="36"><path d="M10 18L35 1c-3 10 0 8 2 17-2 8-4 8-2 17z" fill="url(#gb)" stroke="#2c568a"/><circle cx="4" cy="18" r="4" fill="#5b91cc"/></svg><span>Joins</span></a>
      <a href="#"><svg width="38" height="28"><path d="M1 1v26" stroke="#ddd" stroke-width="2"/><path d="M3 3h34v23H3z" fill="#ececec"/><path d="M6 7h8M6 11h4M26 7h8M30 12h4M28 21h6" stroke="#bbb" stroke-width="2"/><circle cx="18" cy="14" r="8" fill="#efc63c"/><path d="M18 14V6a8 8 0 0 1 0 16z" fill="#d8432f"/><path d="M18 14V6a8 8 0 0 1 8 8z" fill="#4c86c4"/></svg><span>Diagrams</span></a>
      <a href="#"><svg width="38" height="38"><circle cx="19" cy="19" r="18" fill="#5e98d8" stroke="#3e6fa8"/><text x="19" y="30" text-anchor="middle" font-size="33" font-style="italic" font-weight="700" font-family="Liberation Serif" fill="#fff">i</text></svg><span>Metadata</span></a>
      <a href="#"><svg width="38" height="54"><text x="19" y="40" text-anchor="middle" font-size="48" font-family="Liberation Serif" fill="#5d3a6b">ε</text></svg><span>Variables</span></a>
      <a href="#"><svg width="38" height="32"><path d="M4 1h8v8H4z" fill="#f6c915"/><path d="M4 12h8v8H4z" fill="#e8401a"/><path d="M4 23h8v8H4z" fill="#18a04c"/><path d="M14 8h10M14 19h15M14 29h7" stroke="#aaa" stroke-width="3"/></svg><span>Legend</span></a>
    </nav>
    <div class="pane flex-grow-1">
      <div class="position-relative"><select class="combo form-select" style="height:32px;padding-left:32px" aria-label="Renderer"><option>Single symbol</option></select>
        <svg width="22" height="20" style="position:absolute;left:8px;top:6px"><g fill="#17a35b" stroke="#0c6b3a"><path d="M1 1h16v5H1zM5 7h16v5H5zM1 14h16v5H1z"/></g></svg></div>
      <div class="d-flex" style="margin-top:10px;gap:10px">
        <div class="flex-fill" style="flex-basis:0!important;height:150px;background:#fff;border:2px solid #828282">
          <div class="d-flex"><svg width="29" height="25"><path d="M8 9l5 6 5-6" fill="none" stroke="#444" stroke-width="2"/></svg><div class="d-flex align-items-center flex-grow-1 fw-bold" style="height:26px;background:#d9d9d9;padding-left:9px"><svg width="14" height="14"><circle cx="7" cy="7" r="6" fill="#a8446a" stroke="#5a2a44"/></svg><span style="margin-left:16px">Marker</span></div></div>
          <div class="d-flex align-items-center" style="height:29px;padding-left:69px"><svg width="14" height="14"><circle cx="7" cy="7" r="6" fill="#fb272b" stroke="#600" stroke-width="1.200"/></svg><span style="margin-left:10px">Simple marker</span></div>
        </div>
        <div class="flex-fill d-flex justify-content-center" style="flex-basis:0!important"><svg width="150" height="150"><path d="M75 0v150M0 75h150" stroke="#9c9c9c" stroke-width="1.500"/><ellipse cx="75" cy="75" rx="6" ry="6.500" fill="#fb272b" stroke="#300" stroke-width="1.500"/></svg></div>
      </div>
      <div class="d-flex" style="margin-top:10px;gap:12px">
        <button class="pb" style="width:39px" aria-label="Add symbol layer"><svg width="22" height="22" color="#3c9a50"><use href="#addx"/></svg></button>
        <button class="pb dis" style="width:39px" aria-label="Remove symbol layer"><svg width="20" height="20" color="#aaa"><use href="#subx"/></svg></button>
        <button class="pb dis" style="width:39px" aria-label="Lock layer color"><svg width="20" height="24"><path d="M5 11V7c0-6 9-6 9 0" fill="none" stroke="#e6e6e6" stroke-width="2"/><rect x="3" y="11" width="14" height="10" fill="#ddd" stroke="#efefef"/></svg></button>
        <button class="pb dis" style="width:39px" aria-label="Duplicate"><svg width="24" height="24"><path d="M7 3h14v14H7zM3 7v14h12" fill="#ddd" stroke="#f4f4f4" stroke-width="2"/></svg></button>
      </div>
      <div class="rule2" style="margin:11px 0 13px"></div>
      <div class="d-flex align-items-center"><label class="l-unit" for="unit">Unit</label><select id="unit" class="combo form-select flex-grow-1 w-auto" style="padding-left:3px"><option>Millimeter</option></select></div>
      <div class="d-flex align-items-center"><label class="l-unit" for="tr">Transparency 0%</label><input id="tr" type="range" class="thin flex-grow-1" value="0"></div>
      <div class="d-flex align-items-center" style="margin-top:3px"><span class="l-unit">Color</span><button class="swbtn flex-grow-1" style="margin-left:2px" aria-label="Symbol color"><i></i><b><span class="caret"></span></b></button></div>
      <div class="d-flex align-items-center" style="margin-top:13px"><label class="l-size" for="sz">Size</label><div class="spin flex-grow-1"><input id="sz" value="2.00000"><span class="ud"><button aria-label="Up"></button><button aria-label="Down"></button></span></div><button class="flat" style="margin:0 5px 0 16px" aria-label="Size override"><svg width="34" height="30"><use href="#ovr" width="34" height="30"/></svg></button></div>
      <div class="d-flex align-items-center" style="margin-top:18px"><label class="l-size" for="rt">Rotation</label><div class="spin flex-grow-1"><input id="rt" value="0.00 °"><span class="ud"><button aria-label="Up"></button><button aria-label="Down"></button></span></div><button class="flat" style="margin:0 5px 0 16px" aria-label="Rotation override"><svg width="34" height="30"><use href="#ovr" width="34" height="30"/></svg></button></div>
      <div class="rule2" style="margin:11px 0 10px"></div>
      <div class="d-flex align-items-center"><label class="l-unit" for="grp">Symbols in group</label><select id="grp" class="combo white form-select flex-grow-1 w-auto"><option></option></select><button class="pb" style="width:110px;margin:0 1px 0 6px">Open Library</button></div>
      <div class="marklist d-flex" style="margin-top:8px">
        <figure><svg width="34" height="36" viewBox="0 0 34 36"><path d="M17 4q4 3 4 11l11 5q3 5-1 7h-8l3 4-2 3H10l-2-3 3-4H3q-4-2-1-7l11-5q0-8 4-11z"/></svg><figcaption>airport</figcaption></figure>
        <figure><svg width="18" height="36" viewBox="0 0 18 36"><path d="M9 4l7 11h-4v17H6V15H2z" fill="#f5b469" stroke="#333" stroke-width="1.500"/></svg><figcaption>arrow</figcaption></figure>
        <figure class="far"><svg width="14" height="36" viewBox="0 0 14 36"><path d="M1 6v24l12-12z" fill="#f28b13" stroke="#222" stroke-width="1.500"/></svg><figcaption>triangle2</figcaption></figure>
      </div>
      <div class="d-flex justify-content-end" style="margin-top:11px;gap:4px"><button class="pb" style="width:102px">Save</button><button class="pb" style="width:110px;gap:8px">Advanced <span class="caret"></span></button></div>
      <div class="d-flex align-items-center fw-bold" style="margin-top:14px;color:#333"><span class="caret" style="margin-left:4px;border-width:9px 8px 0;border-top-width:11px"></span><span style="margin-left:11px">Layer rendering</span><span class="rule2 flex-grow-1 ms-2"></span></div>
      <div class="d-flex align-items-center" style="margin-top:11px"><label class="w-25" for="lt">Layer transparency</label><div class="groove flex-grow-1"></div><div class="spin" style="width:62px;margin:0 4px 0 10px"><input id="lt" value="0"><span class="ud"><button aria-label="Up"></button><button aria-label="Down"></button></span></div></div>
      <div class="d-flex align-items-center" style="margin-top:11px;height:30px"><span>Layer blending mode</span></div>
      <div class="d-flex align-items-center" style="margin-top:9px"><label class="w-25" for="fb">Feature blending mode</label><select id="fb" class="combo form-select" style="width:445px;padding-left:4px"><option>Normal</option></select></div>
      <div class="d-flex align-items-center" style="margin-top:10px"><input class="form-check-input tickbox" type="checkbox" id="de"><label for="de" style="margin-left:6px">Draw effects</label><button class="pb dis ms-auto" style="width:32px;margin-right:5px" aria-label="Effects"><svg width="26" height="26"><path d="M13 3l3 7 8 1-6 5 2 8-7-4-7 4 2-8-6-5 8-1z" fill="#ddd" stroke="#fff" stroke-width="2"/></svg></button></div>
      <div class="d-flex align-items-center" style="margin-top:11px"><input class="form-check-input tickbox" type="checkbox" id="cf"><label for="cf" style="margin-left:6px">Control feature rendering order</label><button class="pb dis ms-auto" style="width:32px;margin-right:5px" aria-label="Sort order"><svg width="26" height="26"><g font-size="12" font-weight="700" fill="#8f8f8f"><text x="2" y="11">A</text><text x="2" y="23">Z</text></g><path d="M18 3v15M13 15l5 8 6-8z" stroke="#999" stroke-width="2" fill="#999"/></svg></button></div>
      <div class="d-flex" style="margin-top:25px;gap:12px"><button class="pb me-auto" style="width:110px;gap:26px;padding-left:16px;margin-left:1px">Style <span class="caret"></span></button><button class="pb def" style="width:110px">OK</button><button class="pb" style="width:110px">Cancel</button><button class="pb" style="width:110px">Apply</button><button class="pb" style="width:110px">Help</button></div>
    </div>
  </div>
</section>

<section class="win win-color" role="dialog" aria-label="Select color">
  <header class="titlebar" style="padding-left:14px"><svg width="20" height="24"><use href="#qgis"/></svg><span style="margin-left:9px;font-size:17px">Select color</span>
    <div class="ms-auto d-flex"><button class="wbtn">?</button><button class="wbtn" aria-label="Close"><svg width="16" height="16"><use href="#xx"/></svg></button></div></header>
  <div class="d-flex flex-grow-1">
    <div style="width:462px;margin-left:17px;padding-top:19px">
      <div class="nav tabs d-flex align-items-end">
        <button class="nav-link" aria-label="Color box"><svg width="24" height="24"><path d="M1 1h22v22H1z" fill="#fff" stroke="#777" stroke-width="1.500"/><path d="M4 4h16v16H4z" fill="url(#rain)"/></svg></button>
        <button class="nav-link" aria-label="Color wheel"><svg width="24" height="24"><g fill="none" stroke-width="4"><path d="M12 2.500a9.500 9.500 0 0 1 9.500 9.500" stroke="#f8a020"/><path d="M21.500 12a9.500 9.500 0 0 1-9.500 9.500" stroke="#e63ad0"/><path d="M12 21.500A9.500 9.500 0 0 1 2.500 12" stroke="#3a70f0"/><path d="M2.500 12A9.500 9.500 0 0 1 12 2.500" stroke="#3ee080"/></g><path d="M9 7v10l8-5z" fill="#ee3030"/></svg></button>
        <button class="nav-link active" aria-label="Color swatches"><svg width="24" height="24"><path d="M1 1h22v22H1z" fill="#fff" stroke="#777" stroke-width="1.500"/><g><path d="M3 3h5v5H3z" fill="#c01818"/><path d="M9.500 3h5v5h-5z" fill="#e87c1c"/><path d="M16 3h5v5h-5z" fill="#f2c03a"/><path d="M3 9.500h5v5H3z" fill="#8c1038"/><path d="M9.500 9.500h5v5h-5z" fill="#d83878"/><path d="M16 9.500h5v5h-5z" fill="#f08cb4"/><path d="M3 16h5v5H3z" fill="#5a18c0"/><path d="M9.500 16h5v5h-5z" fill="#8050e0"/><path d="M16 16h5v5h-5z" fill="#a898ec"/></g></svg></button>
        <button class="nav-link" aria-label="Color picker"><svg width="24" height="24"><path d="M13 9l3 3L5 22l-4 1 1-4z" fill="#a6bccb" stroke="#55707f"/><path d="M14 6c3-5 7-6 9-4s0 6-4 9l-1 3-8-8z" fill="#3c3c3c"/></svg></button>
      </div>
      <div class="tabpage">
        <div class="d-flex align-items-center gap-1"><select class="combo form-select" style="font-family:var(--cap);padding-left:3px" aria-label="Scheme"><option>Recent colors</option></select><button class="pb" style="width:34px;height:26px" aria-label="Scheme menu"><svg width="26" height="14"><path d="M3 8h3v3H3zM9 8h3v3H9z"/><path d="M14 7h11l-5 6z"/></svg></button></div>
        <div class="colors d-flex" style="margin-top:3px">
          <div class="rows d-flex flex-column flex-grow-1">
            <button class="rowc"><span class="chip"></span><span>#ffffff</span></button>
            <button class="rowc"><span class="chip"><i style="background:#000"></i></span><span>#000000</span></button>
            <button class="rowc"><span class="chip"><i style="background:#e579de"></i></span><span>#e579de</span></button>
            <button class="rowc sel"><span class="chip"><i style="background:#fb272b"></i></span><span>#fb272b</span></button>
            <button class="rowc"><span class="chip"><i style="background:#9a9a9a"></i></span><span>#9a9a9a</span></button>
            <button class="rowc"><span class="chip"><i style="background:#7885c5"></i></span><span>#7885c5</span></button>
            <button class="rowc"><span class="chip"><i style="background:#d81dde"></i></span><span>#d81dde</span></button>
            <button class="rowc"><span class="chip"><i style="background:#f82b10"></i></span><span>#f82b10</span></button>
          </div>
          <div class="vbar d-flex flex-column"><svg width="22" height="24"><path d="M6 16l5-7 5 7" fill="none" stroke="#444" stroke-width="3"/></svg><div class="thumb d-flex align-items-center justify-content-center"><i></i></div><svg width="22" height="24" class="mt-auto"><path d="M6 8l5 7 5-7" fill="none" stroke="#444" stroke-width="3"/></svg></div>
        </div>
        <div class="d-flex justify-content-end gap-1 mt-1"><button class="pb dis" style="width:40px;height:33px" aria-label="Add color"><svg width="20" height="20" color="#999"><use href="#addx"/></svg></button><button class="pb dis" style="width:40px;height:33px" aria-label="Remove color"><svg width="20" height="20" color="#999"><use href="#subx"/></svg></button></div>
      </div>
      <div class="d-flex" style="margin-top:26px;height:228px">
        <div class="d-flex flex-column text-end" style="width:68px;padding-top:45px;gap:100px"><span>Current</span><span>Old</span></div>
        <div class="flex-grow-1 d-flex flex-column" style="margin:1px 14px 1px 12px"><div class="flex-fill" style="background:#fb292d"></div><div class="flex-fill" style="background:#b18c81"></div></div>
        <button class="pb h-100" style="width:39px;margin-right:13px" aria-label="Add to custom colors"><svg width="28" height="32"><path d="M1 10h11V1l14 15-14 15v-9H1z" fill="#6495cb" stroke="#3f6a99" stroke-width="1.500"/></svg></button>
      </div>
    </div>
    <div class="flex-grow-1" style="margin:36px 30px 0 25px">
      <div class="chan"><input class="radio" type="radio" name="c" id="ch"><label for="ch">H</label><input type="range" class="ramp r-h" max="359" value="358" aria-label="Hue"><div class="spin"><input value="358°" aria-label="Hue value"><span class="ud"><button aria-label="Up"></button><button aria-label="Down"></button></span></div></div>
      <div class="chan"><input class="radio" type="radio" name="c" id="cs"><label for="cs">S</label><input type="range" class="ramp r-s" value="85" aria-label="Saturation"><div class="spin"><input value="85%" aria-label="Saturation value"><span class="ud"><button aria-label="Up"></button><button aria-label="Down"></button></span></div></div>
      <div class="chan"><input class="radio" type="radio" name="c" id="cv" checked><label for="cv">V</label><input type="range" class="ramp r-v" value="98" aria-label="Value"><div class="spin"><input value="98%" aria-label="Value value"><span class="ud"><button aria-label="Up"></button><button aria-label="Down"></button></span></div></div>
      <div class="chan"><input class="radio" type="radio" name="c" id="cr"><label for="cr">R</label><input type="range" class="ramp r-r" max="255" value="251" aria-label="Red"><div class="spin"><input value="251" aria-label="Red value"><span class="ud"><button aria-label="Up"></button><button aria-label="Down"></button></span></div></div>
      <div class="chan"><input class="radio" type="radio" name="c" id="cg"><label for="cg">G</label><input type="range" class="ramp r-g" max="255" value="39" aria-label="Green"><div class="spin"><input value="39" aria-label="Green value"><span class="ud"><button aria-label="Up"></button><button aria-label="Down"></button></span></div></div>
      <div class="chan"><input class="radio" type="radio" name="c" id="cb"><label for="cb">B</label><input type="range" class="ramp r-b" max="255" value="43" aria-label="Blue"><div class="spin"><input value="43" aria-label="Blue value"><span class="ud"><button aria-label="Up"></button><button aria-label="Down"></button></span></div></div>
      <div class="chan" style="margin-bottom:15px"><span style="width:63px">Opacity</span><input type="range" class="ramp r-o" value="100" aria-label="Opacity"><div class="spin"><input value="100%" aria-label="Opacity value"><span class="ud"><button aria-label="Up"></button><button aria-label="Down"></button></span></div></div>
      <div class="d-flex align-items-center"><label for="hn" style="width:113px">HTML notation</label><div class="spin flex-grow-1" style="height:27px"><input id="hn" value="#fb272b"><svg width="16" height="14" class="me-1"><path d="M1 1h14L8 13z" fill="#d0d0d0" stroke="#999"/></svg></div></div>
      <div class="cells d-flex" style="margin-top:199px"><button aria-label="Custom 1"></button><button aria-label="Custom 2"></button><button aria-label="Custom 3"></button><button aria-label="Custom 4"></button><button aria-label="Custom 5"></button><button aria-label="Custom 6"></button><button aria-label="Custom 7"></button><button aria-label="Custom 8"></button></div>
      <div class="cells d-flex" style="margin-top:50px"><button aria-label="Custom 9"></button><button aria-label="Custom 10"></button><button aria-label="Custom 11"></button><button aria-label="Custom 12"></button><button aria-label="Custom 13"></button><button aria-label="Custom 14"></button><button aria-label="Custom 15"></button><button aria-label="Custom 16"></button></div>
      <div class="d-flex justify-content-end" style="margin:71px -12px 0 0"><button class="pb def" style="width:110px;height:33px">OK</button></div>
    </div>
  </div>
</section>
<svg class="cur" width="18" height="29"><use href="#arrowcur" width="18" height="29"/></svg>
</div>
<script src="https://cdn.jsdelivr.net/npm/bootstrap@5.3.0/dist/js/bootstrap.bundle.min.js"></script>
</body>
</html>
